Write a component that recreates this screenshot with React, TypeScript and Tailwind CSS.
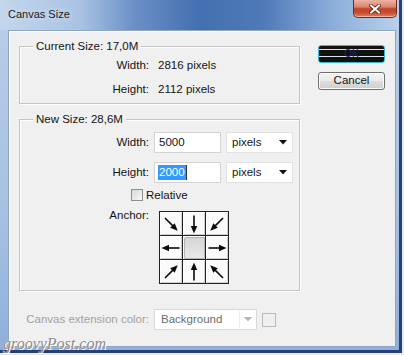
import React from "react";

const cells = [
  { a: 45 }, { a: 90 }, { a: 135 },
  { a: 180 }, { a: -1 }, { a: 0 },
  { a: 315 }, { a: 270 }, { a: 225 },
];

function Arrow({ angle }: { angle: number }) {
  return (
    <svg width="20" height="20" viewBox="0 0 20 20">
      <g transform={`rotate(${angle} 10 10)`}>
        <line x1="1.5" y1="10" x2="14" y2="10" stroke="#0a0a0a" strokeWidth="1.6" />
        <polygon points="19.5,10 12,6.8 12,13.2" fill="#0a0a0a" />
      </g>
    </svg>
  );
}

function Caret({ color = "#111" }: { color?: string }) {
  return (
    <svg width="8" height="5" viewBox="0 0 8 5">
      <polygon points="0,0 8,0 4,4.5" fill={color} />
    </svg>
  );
}

export default function App() {
  return (
    <div className="w-[404px] h-[355px] overflow-hidden relative bg-[#e4edf7] font-['Liberation_Sans',Arial,sans-serif] text-[11.5px] text-[#141414]">
      <div className="w-[402px] h-[353px] border-r-[3px] border-b-[3px] border-[#24407a] bg-[linear-gradient(to_bottom,#b9cfe9,#a7c1e3_60%,#8fb0dc)] flex flex-col">
        {/* title bar */}
        <div className="h-[30px] flex justify-between items-start bg-[linear-gradient(90deg,#c3d6ec_0%,#a9c3e4_20%,#6a8fc6_34%,#4370b0_50%,#4f7ab8_66%,#8dafdb_84%,#bad0ea_100%)]">
          <div className="h-[28px] pl-[8px] flex items-center text-[11px] text-[#1a1a1a] [text-shadow:0_0_6px_#e8f0fa]">
            Canvas Size
          </div>
          <div className="mr-[2px] w-[44px] h-[18px] rounded-b-[5px] border border-t-0 border-[#6e2a1f] bg-[linear-gradient(to_bottom,#ecb3a5_0%,#d98670_40%,#c2432a_52%,#c84d32_75%,#e0835f_100%)] shadow-[inset_0_-1px_0_#f2b59c] flex items-center justify-center">
            <svg width="12" height="10" viewBox="0 0 12 10">
              <path d="M2 1.5 L10 8.5 M10 1.5 L2 8.5" stroke="#5a1f14" strokeWidth="3.6" strokeLinecap="square" />
              <path d="M2 1.5 L10 8.5 M10 1.5 L2 8.5" stroke="#fff" strokeWidth="2" strokeLinecap="square" />
            </svg>
          </div>
        </div>

        {/* client area */}
        <div className="ml-[8px] w-[388px] h-[317px] border border-[#8ea6c6] bg-[#f0f0f0] shadow-[inset_1px_1px_0_#fff] pl-[10px] pt-[14px] flex items-start">
          <div className="w-[281px] mt-[1px] flex flex-col">
            {/* current size */}
            <div className="relative h-[58px] border border-[#c4c4c4] shadow-[inset_1px_1px_0_#fff,1px_1px_0_#fff] pt-[7px]">
              <span className="absolute left-[13px] top-[-1px] -translate-y-1/2 px-[3px] bg-[#f0f0f0] leading-[14px]">
                Current Size: 17,0M
              </span>
              <div className="flex h-[24px] items-center">
                <span className="w-[129px] text-right">Width:</span>
                <span className="ml-[9px]">2816 pixels</span>
              </div>
              <div className="flex h-[24px] items-center">
                <span className="w-[129px] text-right">Height:</span>
                <span className="ml-[9px]">2112 pixels</span>
              </div>
            </div>

            {/* new size */}
            <div className="relative mt-[15px] h-[172px] border border-[#c4c4c4] shadow-[inset_1px_1px_0_#fff,1px_1px_0_#fff] pt-[12px]">
              <span className="absolute left-[13px] top-[-1px] -translate-y-1/2 px-[3px] bg-[#f0f0f0] leading-[14px]">
                New Size: 28,6M
              </span>
              <div className="flex h-[21px] items-center">
                <span className="w-[129px] text-right">Width:</span>
                <div className="ml-[5px] w-[67px] h-[21px] border border-[#d4d4d4] bg-white pl-[4px] flex items-center">5000</div>
                <div className="ml-[5px] w-[67px] h-[21px] border border-[#e2e2e2] bg-white pl-[5px] pr-[5px] flex items-center justify-between">
                  <span>pixels</span>
                  <Caret />
                </div>
              </div>
              <div className="flex h-[21px] items-center mt-[9px]">
                <span className="w-[129px] text-right">Height:</span>
                <div className="ml-[5px] w-[67px] h-[21px] border border-[#d4d4d4] bg-white pl-[3px] flex items-center">
                  <span className="bg-[#3399ff] text-white px-[1px] leading-[15px]">2000</span>
                  <span className="w-px h-[15px] bg-[#333]" />
                </div>
                <div className="ml-[5px] w-[67px] h-[21px] border border-[#e2e2e2] bg-white pl-[5px] pr-[5px] flex items-center justify-between">
                  <span>pixels</span>
                  <Caret />
                </div>
              </div>
              <div className="flex h-[12px] items-center mt-[6px]">
                <div className="ml-[111px] w-[12px] h-[12px] border border-[#8e8f8f] bg-[linear-gradient(135deg,#d8d8d8,#f7f7f7)]" />
                <span className="ml-[3px] leading-[14px]">Relative</span>
              </div>
              <div className="flex items-start mt-[7px]">
                <span className="w-[129px] text-right leading-[14px]">Anchor:</span>
                <div className="ml-[10px] mt-[3px] w-[70px] h-[73px] border-l border-t border-[#222] grid grid-cols-3">
                  {cells.map((c, i) => (
                    <div key={i} className="w-[23px] h-[24px] border-r border-b border-[#222] bg-[#fafafa] shadow-[inset_1px_1px_0_#fff,inset_-1px_-1px_0_#d0d0d0] flex items-center justify-center">
                      {c.a < 0 ? (
                        <div className="w-[21px] h-[22px] rounded-[2px] border border-[#b4b4b4] bg-[linear-gradient(to_bottom,#d6d6d6,#e9e9e9)]" />
                      ) : (
                        <Arrow angle={c.a} />
                      )}
                    </div>
                  ))}
                </div>
              </div>
            </div>

            {/* canvas extension color */}
            <div className="flex h-[21px] items-center mt-[18px]">
              <span className="w-[130px] text-right text-[#a2a2a2]">Canvas extension color:</span>
              <div className="ml-[5px] w-[103px] h-[21px] border border-[#d9d9d9] bg-white flex items-center">
                <span className="pl-[6px] w-[84px] text-[#6c6c6c]">Background</span>
                <span className="w-px h-[17px] bg-[#ececec]" />
                <span className="flex-1 flex justify-center">
                  <Caret color="#b4b4b4" />
                </span>
              </div>
              <div className="ml-[5px] w-[14px] h-[14px] border border-[#b9b9b9] bg-[#f0f0f0]" />
            </div>
          </div>

          {/* buttons */}
          <div className="ml-[18px] w-[67px] flex flex-col">
            <div className="h-[18px] rounded-[3px] border border-[#35b8d8] bg-[linear-gradient(to_bottom,#111_0,#111_3px,#d6e6ec_3px,#d6e6ec_4px,#111_4px,#111_10px,#d6e6ec_10px,#d6e6ec_11px,#111_11px,#111_16px)] flex items-center justify-center text-[#1c2464] text-[10px] leading-none">
              OK
            </div>
            <div className="mt-[9px] h-[18px] rounded-[3px] border border-[#707070] bg-[linear-gradient(to_bottom,#f3f3f3,#ebebeb_50%,#dddddd_50%,#cfcfcf)] shadow-[inset_0_0_0_1px_#fbfbfb] flex items-center justify-center leading-none">
              Cancel
            </div>
          </div>
        </div>
      </div>

      {/* watermark */}
      <span className="absolute left-[3px] top-[332px] font-['Liberation_Serif',serif] italic text-[16px] text-[#8a8a8a] [text-shadow:0_0_1px_#fff,1px_1px_0_#fff]">
        groovyPost.com
      </span>
    </div>
  );
}
